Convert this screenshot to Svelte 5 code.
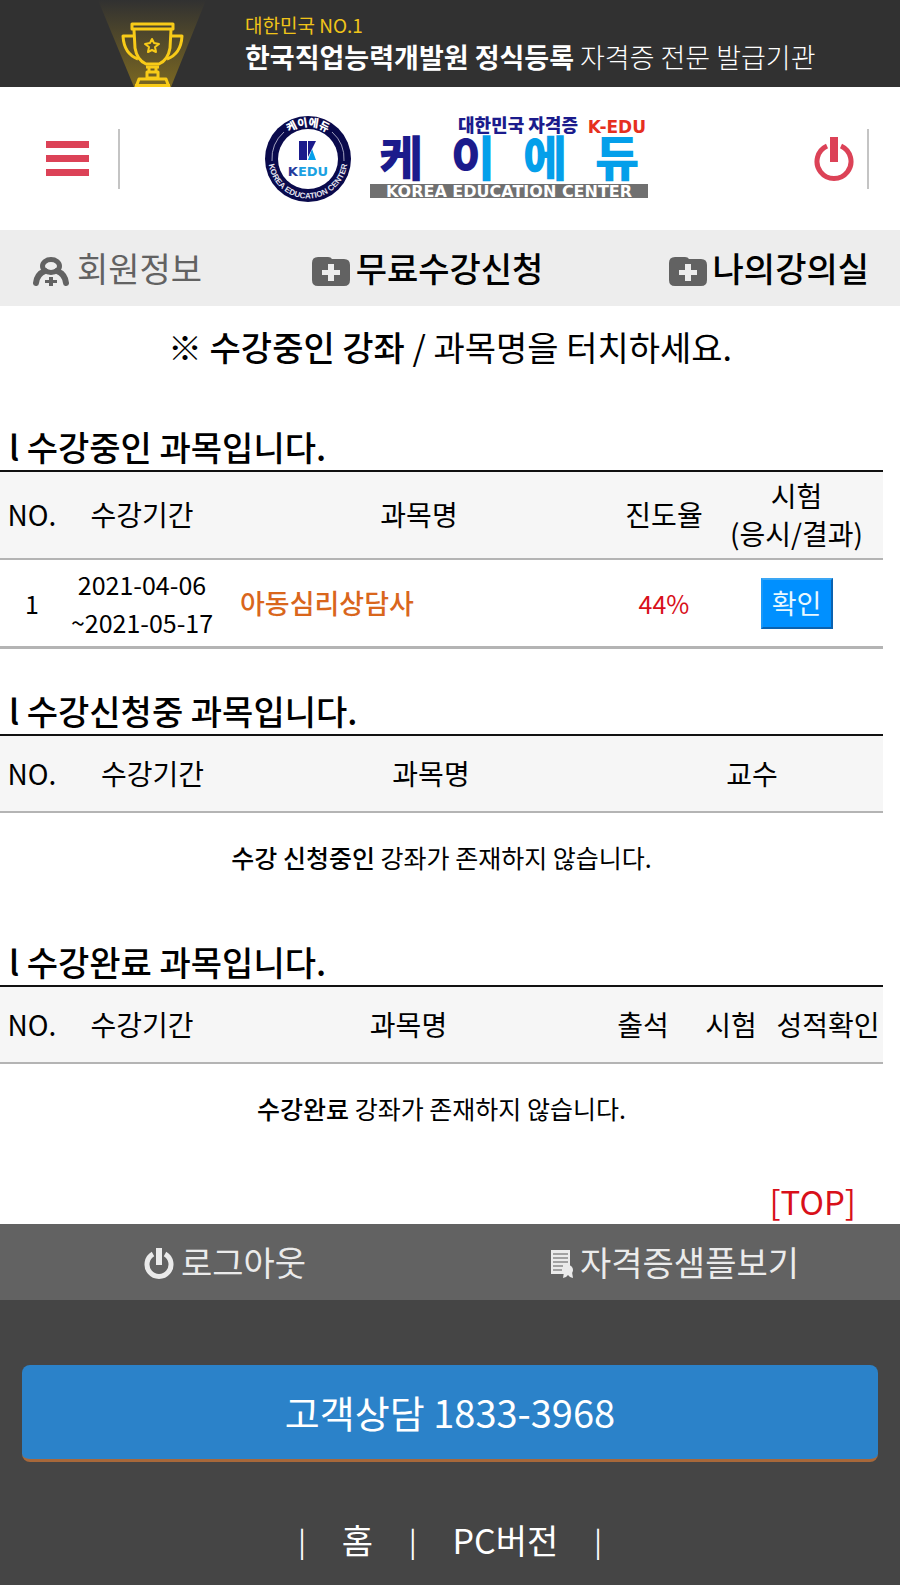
<script lang="ts">
  // 수강중인 강좌
  const courses = [
    { no: 1, start: '2021-04-06', end: '2021-05-17', name: '아동심리상담사', progress: 44 }
  ];

  function confirmExam(no: number) {
    console.log('exam', no);
  }
</script>

{#snippet folderIcon()}
  <svg class="icon-folder" width="38" height="29" viewBox="0 0 38 29" aria-hidden="true">
    <path fill="#626262" d="M6 0h10q3 0 4 2h12q6 0 6 6v15q0 6-6 6H6q-6 0-6-6V6q0-6 6-6z" />
    <path fill="#ededed" d="M16 7h6v6h6v5h-6v6h-6v-6h-6v-5h6z" />
  </svg>
{/snippet}

<div class="page">
  <div class="banner">
    <svg class="trophy" width="108" height="87" viewBox="0 0 108 87" aria-hidden="true">
      <defs>
        <linearGradient id="beam" x1="0" y1="0" x2="0" y2="1">
          <stop offset="0" stop-color="#313131" />
          <stop offset="1" stop-color="#7a6722" />
        </linearGradient>
      </defs>
      <path fill="url(#beam)" d="M0 0h108L73 87H36z" />
      <g fill="none" stroke="#f8cb18" stroke-width="3" stroke-linejoin="round">
        <rect x="34" y="24" width="41" height="5" />
        <path d="M36 30l1 18q2 12 11 16h13q9-4 11-16l1-18" />
        <path d="M36 36H25q1 18 15 23M73 36h11q-1 18-15 23" />
        <path d="M48 67h13M51 67v5M58 67v5M49 72h11v6H49z" />
        <path d="M41 79h27l3 8H38z" />
        <path stroke-width="2" d="M54 39l2 4 5 1-4 3 1 5-4-2-4 2 1-5-4-3 5-1z" />
      </g>
      <path fill="#f8cb18" d="M37 84h35v3H37z" />
    </svg>
    <div class="banner-text">
      <p class="banner-small">대한민국 NO.1</p>
      <p class="banner-large"><strong>한국직업능력개발원 정식등록</strong> 자격증 전문 발급기관</p>
    </div>
  </div>

  <header class="header">
    <button type="button" class="header-btn menu-btn" aria-label="메뉴">
      <svg width="43" height="36" viewBox="0 0 43 36" aria-hidden="true">
        <path fill="#dc4257" d="M0 0h43v7H0zM0 14h43v7H0zM0 28h43v7H0z" />
      </svg>
    </button>
    <a href="/" class="logo" aria-label="케이에듀">
      <svg width="386" height="88" viewBox="0 0 386 88">
        <defs>
          <path id="ringTop" d="M11.500 44a32.500 32.500 0 0 1 65 0" />
          <path id="ringBottom" d="M4.500 44a39.500 39.500 0 0 0 79 0" />
          <linearGradient id="split" x1="0" y1="0" x2="1" y2="0">
            <stop offset="0.700" stop-color="#1b1b8c" />
            <stop offset="0.700" stop-color="#049fea" />
          </linearGradient>
        </defs>
        <circle cx="44" cy="44" r="43" fill="#0a0a4c" />
        <circle cx="44" cy="44" r="30" fill="#fff" />
        <path fill="none" stroke="#c9c9dc" stroke-width="0.800" d="M8 46A36 36 0 0 1 20 17M80 46A36 36 0 0 0 68 17" />
        <text class="ring-ko"><textPath href="#ringTop" startOffset="50%">케이에듀</textPath></text>
        <text class="ring-en"><textPath href="#ringBottom" startOffset="50%">KOREA EDUCATION CENTER</textPath></text>
        <path fill="#1b1b8c" d="M35 26h8v19h-8zM44 26h8l-4 8-4 8z" />
        <path fill="#049fea" d="M48 34l4 11h-8z" />
        <text class="emblem-name" x="44" y="61" fill="url(#split)"><tspan fill="#24399c">K</tspan><tspan fill="#1ba1e2">EDU</tspan></text>
        <text class="logo-top" x="314" y="17">대한민국 자격증</text>
        <text class="logo-edu" x="382" y="18">K-EDU</text>
        <text class="logo-name" x="137" y="61" fill="#1b1b8c">케</text>
        <text class="logo-name" x="209" y="61" fill="url(#split)">이</text>
        <text class="logo-name" x="281" y="61" fill="#049fea">에</text>
        <text class="logo-name" x="353" y="61" fill="#049fea">듀</text>
        <rect x="106" y="69" width="278" height="14" fill="#707070" />
        <text class="logo-bar" x="245" y="82">KOREA EDUCATION CENTER</text>
      </svg>
    </a>
    <button type="button" class="header-btn power-btn" aria-label="로그아웃">
      <svg width="40" height="46" viewBox="0 0 40 46" aria-hidden="true">
        <path fill="none" stroke="#dc4257" stroke-width="5" d="M13 10a17 17 0 1 0 14 0" />
        <path fill="#dc4257" d="M16 1h8v25h-8z" />
      </svg>
    </button>
  </header>

  <nav class="nav">
    <a href="/member" class="nav-link nav-member">
      <svg width="36" height="29" viewBox="0 0 36 29" aria-hidden="true">
        <ellipse cx="18" cy="9" rx="8.500" ry="6.500" fill="none" stroke="#626262" stroke-width="5" />
        <path fill="none" stroke="#626262" stroke-width="6" stroke-linecap="round" d="M3 26q1-9 9-12M33 26q-1-9-9-12" />
        <path fill="#626262" d="M16 20h4v3h4v3h-4v3h-4v-3h-4v-3h4z" />
      </svg>
      <span>회원정보</span>
    </a>
    <a href="/free" class="nav-link">
      {@render folderIcon()}
      <span>무료수강신청</span>
    </a>
    <a href="/classroom" class="nav-link">
      {@render folderIcon()}
      <span>나의강의실</span>
    </a>
  </nav>

  <main class="content">
    <p class="hint"><strong>※ 수강중인 강좌</strong> / 과목명을 터치하세요.</p>

    <section class="section-current">
      <h2>l 수강중인 과목입니다.</h2>
      <table>
        <colgroup>
          <col class="col-no" />
          <col class="col-period" />
          <col />
          <col class="col-rate" />
          <col class="col-exam" />
        </colgroup>
        <thead class="tall">
          <tr>
            <th>NO.</th>
            <th>수강기간</th>
            <th>과목명</th>
            <th>진도율</th>
            <th>시험<br />(응시/결과)</th>
          </tr>
        </thead>
        <tbody>
          {#each courses as course}
            <tr>
              <td>{course.no}</td>
              <td>{course.start}<br />~{course.end}</td>
              <td class="subject"><a href="/course/{course.no}">{course.name}</a></td>
              <td class="rate">{course.progress}%</td>
              <td>
                <button type="button" class="confirm-btn" onclick={() => confirmExam(course.no)}>확인</button>
              </td>
            </tr>
          {/each}
        </tbody>
      </table>
    </section>

    <section>
      <h2>l 수강신청중 과목입니다.</h2>
      <table>
        <colgroup>
          <col class="col-no" />
          <col class="col-period-wide" />
          <col />
          <col class="col-teacher" />
        </colgroup>
        <thead>
          <tr>
            <th>NO.</th>
            <th>수강기간</th>
            <th>과목명</th>
            <th>교수</th>
          </tr>
        </thead>
      </table>
      <p class="empty"><strong>수강 신청중인</strong> 강좌가 존재하지 않습니다.</p>
    </section>

    <section>
      <h2>l 수강완료 과목입니다.</h2>
      <table>
        <colgroup>
          <col class="col-no" />
          <col class="col-period" />
          <col />
          <col class="col-attend" />
          <col class="col-test" />
          <col class="col-grade" />
        </colgroup>
        <thead>
          <tr>
            <th>NO.</th>
            <th>수강기간</th>
            <th>과목명</th>
            <th>출석</th>
            <th>시험</th>
            <th>성적확인</th>
          </tr>
        </thead>
      </table>
      <p class="empty"><strong>수강완료</strong> 강좌가 존재하지 않습니다.</p>
    </section>

    <p class="top"><a href="#app">[TOP]</a></p>
  </main>

  <footer class="footer">
    <div class="footer-menu">
      <a href="/logout">
        <svg width="30" height="32" viewBox="0 0 30 32" aria-hidden="true">
          <path fill="none" stroke="#ebebeb" stroke-width="5" d="M9 6a12 12 0 1 0 12 0" />
          <path fill="#ebebeb" d="M12 0h6v17h-6z" />
        </svg>
        <span>로그아웃</span>
      </a>
      <a href="/sample">
        <svg width="22" height="28" viewBox="0 0 22 28" aria-hidden="true">
          <path fill="#ebebeb" d="M0 0h19v16l-6 3v5H0z" />
          <path stroke="#8a8a8a" stroke-width="1.500" d="M2 4h15M2 8h15M2 12h15M2 16h10M2 20h9" />
          <circle cx="17" cy="20" r="5" fill="#ebebeb" />
          <path fill="#ebebeb" d="M13 22h8l1 6-3-1-2-2-2 2-3 1z" />
        </svg>
        <span>자격증샘플보기</span>
      </a>
    </div>
    <a href="tel:1833-3968" class="call-btn">고객상담 1833-3968</a>
    <div class="footer-links">
      <span>|</span>
      <a href="/">홈</a>
      <span>|</span>
      <a href="/pc">PC버전</a>
      <span>|</span>
    </div>
  </footer>
</div>

<style>
  :global(body) {
    margin: 0;
    background: #454545;
  }

  .page {
    background: #fff;
    color: #000;
    font-family: 'Noto Sans CJK KR', 'Noto Sans', sans-serif;
  }

  p,
  h2 {
    margin: 0;
  }

  a {
    color: inherit;
    text-decoration: none;
  }

  button {
    font-family: inherit;
    cursor: pointer;
  }

  strong {
    font-weight: 500;
  }

  /* 상단 배너 */
  .banner {
    display: flex;
    gap: 39px;
    padding-left: 98px;
    height: 87px;
    background: #313131;
  }

  .trophy {
    flex: none;
  }

  .banner-text {
    padding-top: 11px;
    white-space: nowrap;
  }

  .banner-small {
    font-size: 19px;
    line-height: 28px;
    color: #f0c419;
  }

  .banner-large {
    font-size: 27px;
    line-height: 36px;
    font-weight: 300;
    color: #fff;
  }

  .banner-large strong {
    font-weight: 700;
  }

  /* 헤더 */
  .header {
    display: flex;
    align-items: center;
    justify-content: space-between;
    height: 143px;
    padding: 0 31px 0 46px;
  }

  .header-btn {
    display: flex;
    align-items: center;
    height: 60px;
    padding: 0;
    background: none;
    border: none;
  }

  .menu-btn {
    padding-right: 29px;
    border-right: 2px solid #c4c4c4;
  }

  .power-btn {
    padding-right: 13px;
    border-right: 2px solid #c4c4c4;
  }

  .logo {
    margin-right: 20px;
  }

  .logo svg {
    display: block;
  }

  .logo text {
    text-anchor: middle;
  }

  .logo .ring-ko {
    font-size: 11px;
    font-weight: 900;
    fill: #fff;
  }

  .logo .ring-en {
    font-family: 'Liberation Sans', sans-serif;
    font-size: 8px;
    font-weight: 700;
    fill: #e4e4f0;
  }

  .logo .emblem-name {
    font-family: 'DejaVu Sans', sans-serif;
    font-size: 13px;
    font-weight: 700;
  }

  .logo .logo-top {
    font-size: 18px;
    font-weight: 900;
    fill: #1b1b8c;
    text-anchor: end;
  }

  .logo .logo-edu {
    font-family: 'DejaVu Sans', sans-serif;
    font-size: 17px;
    font-weight: 700;
    fill: #e6301f;
    text-anchor: end;
  }

  .logo .logo-name {
    font-size: 48px;
    font-weight: 900;
  }

  .logo .logo-bar {
    font-family: 'DejaVu Sans', sans-serif;
    font-size: 16px;
    font-weight: 700;
    fill: #fff;
  }

  /* 메뉴 */
  .nav {
    display: grid;
    grid-template-columns: calc(100% / 3) 1fr auto;
    align-items: center;
    height: 76px;
    padding: 0 31px 0 33px;
    background: #ededed;
  }

  .nav-link {
    display: flex;
    align-items: center;
    gap: 6px;
    font-size: 34px;
    line-height: 50px;
    font-weight: 500;
  }

  .nav-link svg {
    margin-top: 6px;
  }

  .nav-member {
    gap: 8px;
    font-weight: 400;
    color: #626262;
  }

  /* 본문 */
  .hint {
    padding: 16px 0 52px;
    font-size: 34px;
    line-height: 50px;
    text-align: center;
  }

  section {
    padding-right: 17px;
  }

  .section-current {
    margin-bottom: 39px;
  }

  h2 {
    padding-left: 9px;
    font-size: 34px;
    line-height: 46px;
    font-weight: 500;
  }

  table {
    width: 100%;
    table-layout: fixed;
    border-collapse: separate;
    border-spacing: 0;
    border-top: 2px solid #111;
  }

  th,
  td {
    box-sizing: border-box;
    padding: 0;
    text-align: center;
    vertical-align: middle;
    line-height: 38px;
    white-space: nowrap;
  }

  th {
    height: 77px;
    padding-bottom: 2px;
    font-size: 28px;
    font-weight: 400;
    background: #f6f6f6;
    border-bottom: 2px solid #b4b4b4;
  }

  .tall th {
    height: 88px;
  }

  td {
    height: 89px;
    font-size: 25px;
    border-bottom: 3px solid #b4b4b4;
  }

  .col-no {
    width: 64px;
  }

  .col-period {
    width: 156px;
  }

  .col-period-wide {
    width: 177px;
  }

  .col-rate {
    width: 92px;
  }

  .col-exam {
    width: 173px;
  }

  .col-teacher {
    width: 262px;
  }

  .col-attend {
    width: 92px;
  }

  .col-test {
    width: 84px;
  }

  .col-grade {
    width: 110px;
  }

  .subject {
    padding-left: 20px;
    font-size: 27px;
    font-weight: 500;
    text-align: left;
    color: #d9661c;
  }

  .rate {
    color: #d8101a;
  }

  .confirm-btn {
    width: 72px;
    height: 51px;
    padding: 0;
    font-size: 27px;
    line-height: 38px;
    color: #e8f8ff;
    background: #0090ff;
    border: 2px solid;
    border-color: #3aa6f4 #0a62b0 #0a62b0 #1a98f8;
  }

  .empty {
    padding: 24px 0 62px;
    font-size: 25px;
    line-height: 40px;
    text-align: center;
  }

  section:last-of-type .empty {
    padding-bottom: 50px;
  }

  .top {
    padding-right: 44px;
    font-size: 33px;
    line-height: 46px;
    text-align: right;
    color: #d8101a;
  }

  /* 푸터 */
  .footer {
    color: #fff;
    background: #454545;
  }

  .footer-menu {
    display: grid;
    grid-template-columns: 1fr 1fr;
    align-items: center;
    height: 76px;
    margin-bottom: 65px;
    color: #ebebeb;
    background: #626262;
  }

  .footer-menu a {
    display: flex;
    align-items: center;
    justify-content: center;
    gap: 7px;
    font-size: 34px;
    line-height: 50px;
  }

  .footer-menu svg {
    margin-top: 4px;
  }

  .call-btn {
    display: block;
    margin: 0 22px;
    font-size: 38px;
    line-height: 94px;
    text-align: center;
    background: #2b82c9;
    border-bottom: 3px solid #a8683a;
    border-radius: 8px;
  }

  .footer-links {
    display: flex;
    align-items: center;
    justify-content: center;
    gap: 36px;
    padding: 53px 0 20px;
    font-size: 34px;
    line-height: 50px;
  }

  .footer-links span {
    font-size: 28px;
  }
</style>
